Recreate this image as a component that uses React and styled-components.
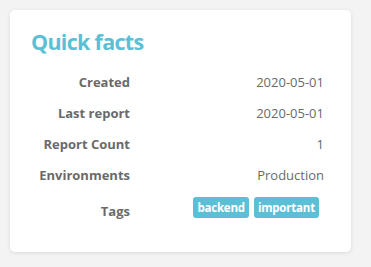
import React from 'react';
import styled, { createGlobalStyle } from 'styled-components';

const GlobalStyle = createGlobalStyle`
  html, body {
    margin: 0;
    padding: 0;
    background: #f3f3f3;
    font-family: "Open Sans", "Noto Sans", sans-serif;
  }
`;

const Page = styled.div`
  padding: 10px 20px 15px 10px;
`;

const Card = styled.section`
  background: #fff;
  border-radius: 5px;
  box-shadow: 0 1px 4px rgba(0, 0, 0, 0.1);
  height: 242px;
  box-sizing: border-box;
  padding: 17px 27px 0 20px;
`;

const Title = styled.h2`
  margin: 0 0 10px 1px;
  font-size: 21.5px;
  line-height: 30px;
  font-weight: 700;
  color: #5bc0d6;
  letter-spacing: -0.7px;
`;

const Facts = styled.dl`
  display: grid;
  grid-template-columns: 100px 1fr;
  margin: 0;
`;

const Label = styled.dt`
  display: flex;
  align-items: center;
  justify-content: flex-end;
  padding: ${p => (p.$tall ? '6px 0 0' : '7px 0')};
  font-size: 13px;
  line-height: 17px;
  font-weight: 700;
  color: #6a6a6a;
`;

const Value = styled.dd`
  display: flex;
  align-items: center;
  justify-content: flex-end;
  gap: 5px;
  margin: 0;
  padding: ${p => (p.$tall ? '6px 5px 8px 0' : '7px 0')};
  font-size: 13px;
  line-height: 17px;
  color: #6a6a6a;
`;

const Tag = styled.span`
  display: inline-block;
  background: #5bc0d6;
  color: #fff;
  font-size: 11.5px;
  font-weight: 700;
  line-height: 21px;
  padding: 0 4px;
  border-radius: 3px;
  letter-spacing: -0.2px;
`;

const facts = [
  ['Created', '2020-05-01'],
  ['Last report', '2020-05-01'],
  ['Report Count', '1'],
  ['Environments', 'Production'],
];

const tags = ['backend', 'important'];

export default function App() {
  return (
    <Page>
      <GlobalStyle />
      <Card>
        <Title>Quick facts</Title>
        <Facts>
          {facts.map(([label, value]) => (
            <React.Fragment key={label}>
              <Label>{label}</Label>
              <Value>{value}</Value>
            </React.Fragment>
          ))}
          <Label $tall>Tags</Label>
          <Value $tall>
            {tags.map(t => (
              <Tag key={t}>{t}</Tag>
            ))}
          </Value>
        </Facts>
      </Card>
    </Page>
  );
}
